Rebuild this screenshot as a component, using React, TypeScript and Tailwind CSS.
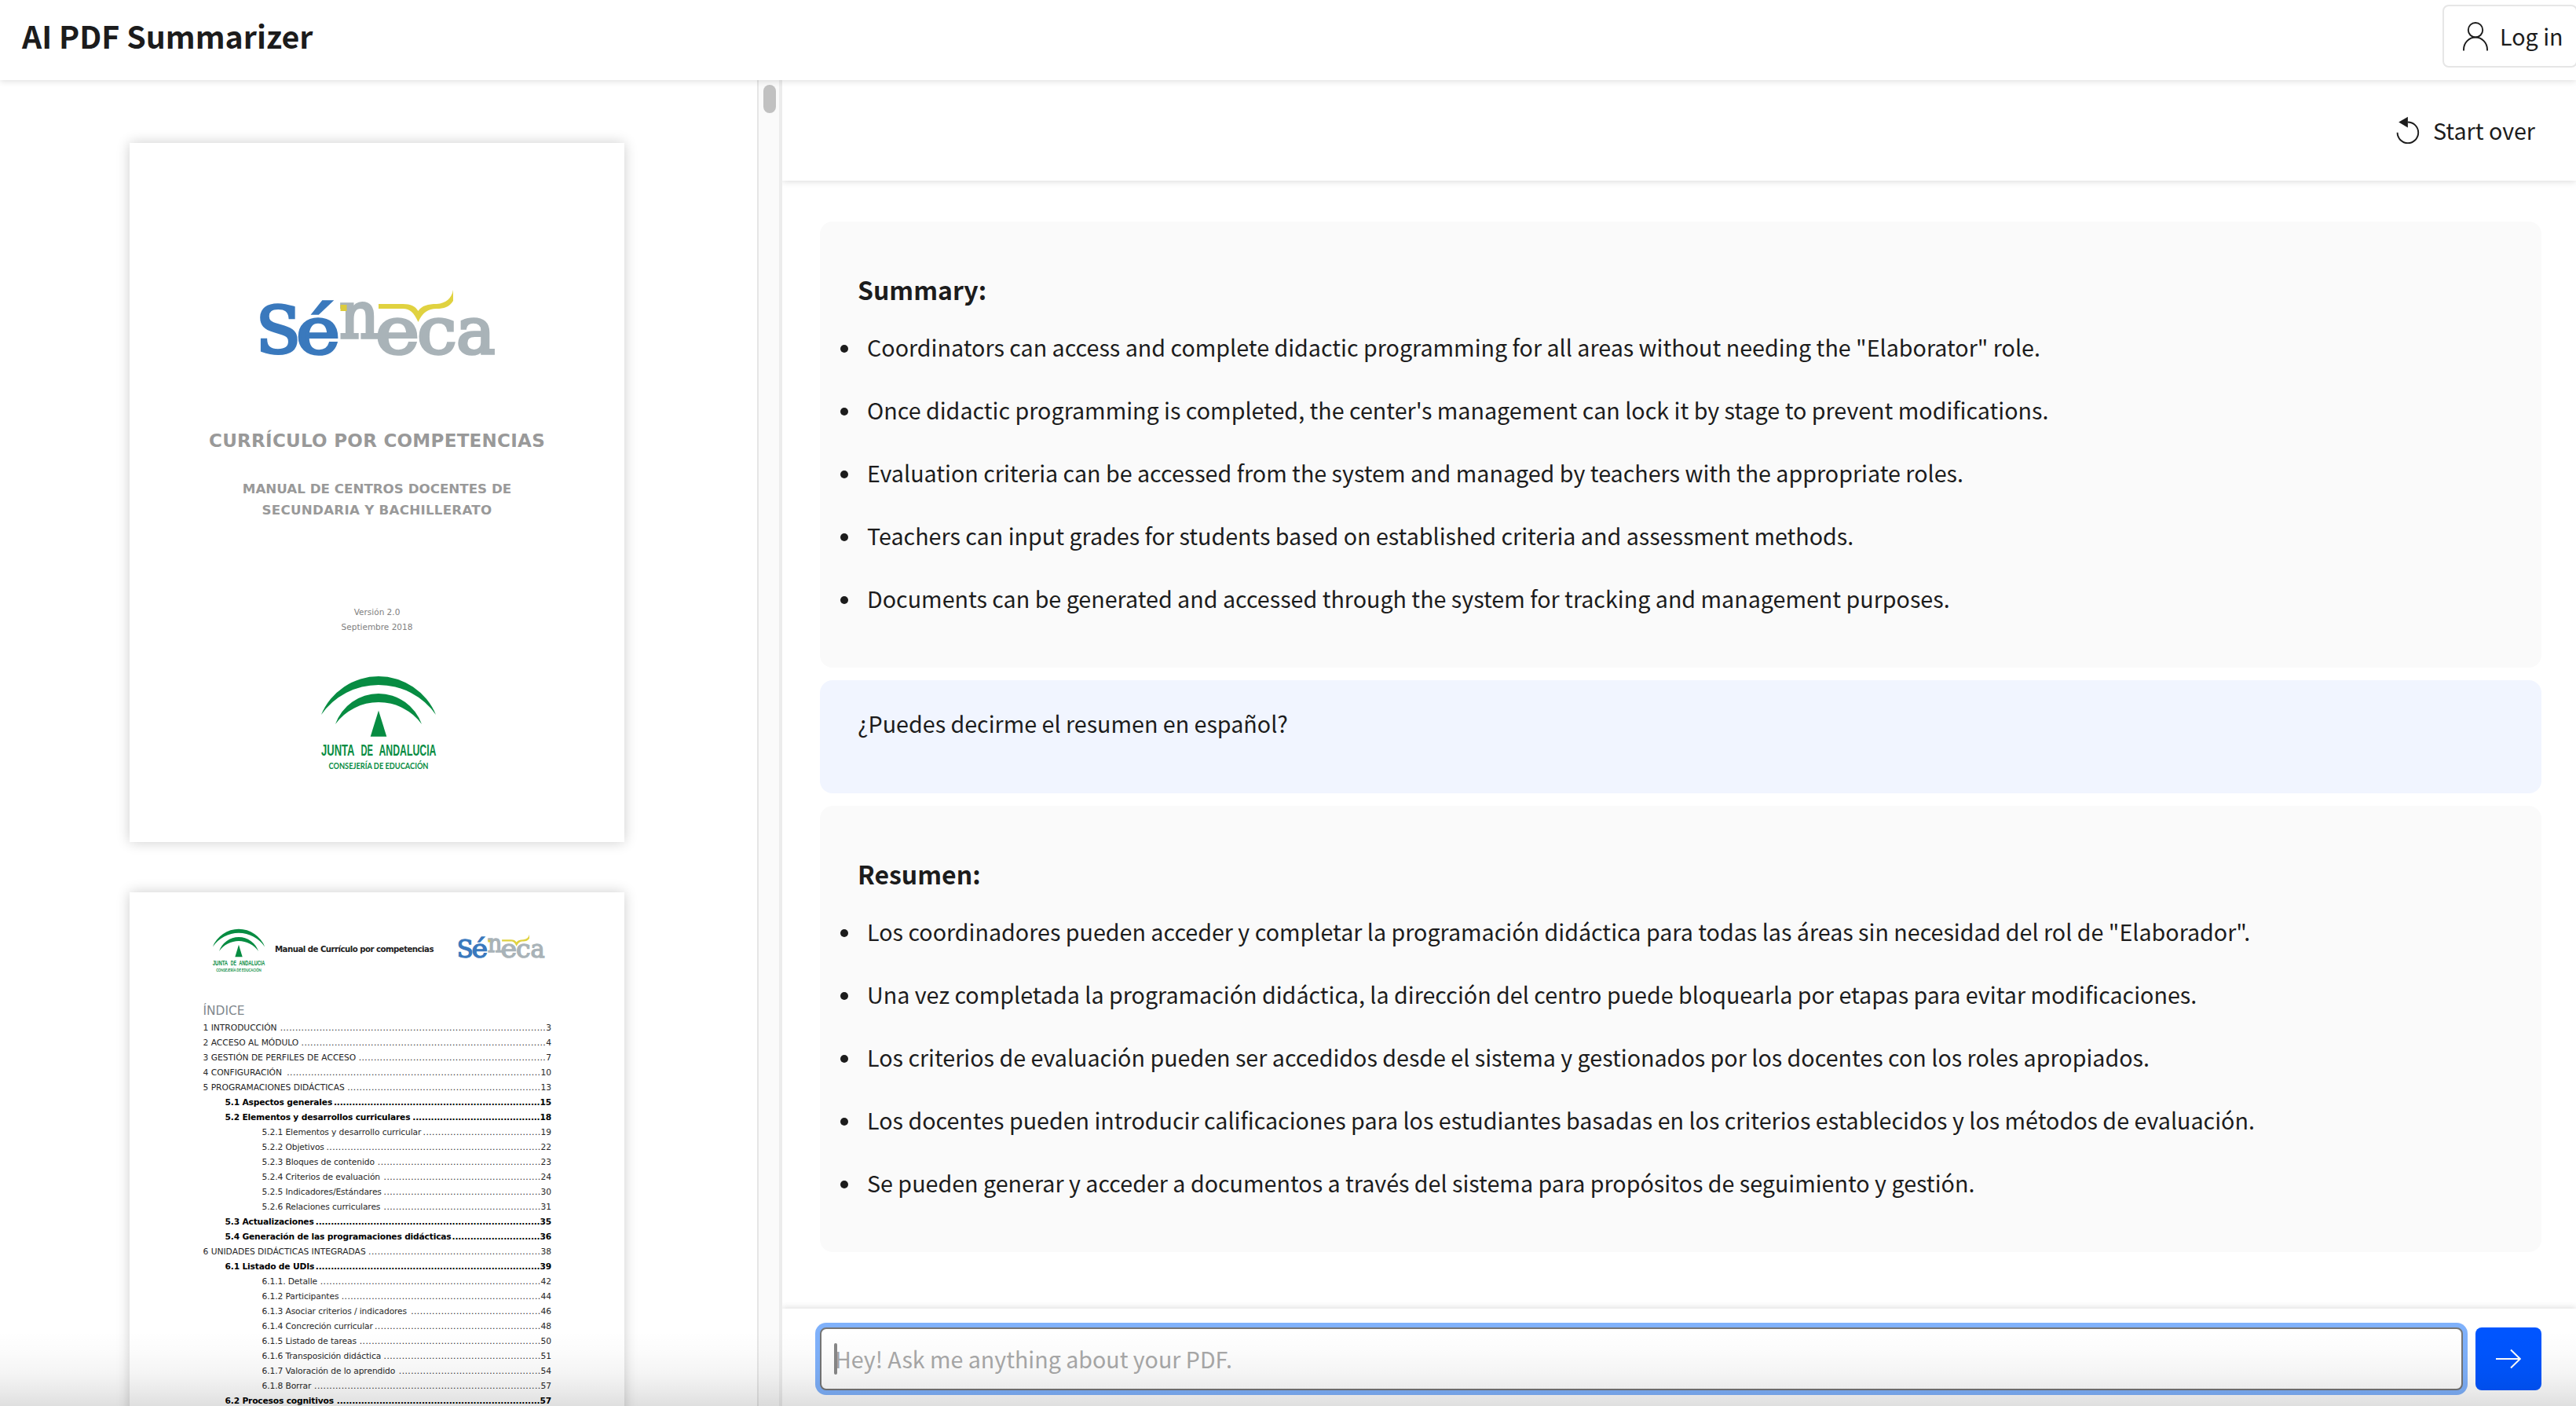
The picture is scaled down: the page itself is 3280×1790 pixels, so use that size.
import { useLayoutEffect, useRef, useState } from "react";

type Entry = { level: 0 | 1 | 2; label: string; page: string };

const TOC: Entry[] = [
  { level: 0, label: "1 INTRODUCCIÓN", page: "3" },
  { level: 0, label: "2 ACCESO AL MÓDULO", page: "4" },
  { level: 0, label: "3 GESTIÓN DE PERFILES DE ACCESO", page: "7" },
  { level: 0, label: "4 CONFIGURACIÓN", page: "10" },
  { level: 0, label: "5 PROGRAMACIONES DIDÁCTICAS", page: "13" },
  { level: 1, label: "5.1 Aspectos generales", page: "15" },
  { level: 1, label: "5.2 Elementos y desarrollos curriculares", page: "18" },
  { level: 2, label: "5.2.1 Elementos y desarrollo curricular", page: "19" },
  { level: 2, label: "5.2.2 Objetivos", page: "22" },
  { level: 2, label: "5.2.3 Bloques de contenido", page: "23" },
  { level: 2, label: "5.2.4 Criterios de evaluación", page: "24" },
  { level: 2, label: "5.2.5 Indicadores/Estándares", page: "30" },
  { level: 2, label: "5.2.6 Relaciones curriculares", page: "31" },
  { level: 1, label: "5.3 Actualizaciones", page: "35" },
  { level: 1, label: "5.4 Generación de las programaciones didácticas", page: "36" },
  { level: 0, label: "6 UNIDADES DIDÁCTICAS INTEGRADAS", page: "38" },
  { level: 1, label: "6.1 Listado de UDIs", page: "39" },
  { level: 2, label: "6.1.1. Detalle", page: "42" },
  { level: 2, label: "6.1.2 Participantes", page: "44" },
  { level: 2, label: "6.1.3 Asociar criterios / indicadores", page: "46" },
  { level: 2, label: "6.1.4 Concreción curricular", page: "48" },
  { level: 2, label: "6.1.5 Listado de tareas", page: "50" },
  { level: 2, label: "6.1.6 Transposición didáctica", page: "51" },
  { level: 2, label: "6.1.7 Valoración de lo aprendido", page: "54" },
  { level: 2, label: "6.1.8 Borrar", page: "57" },
  { level: 1, label: "6.2 Procesos cognitivos", page: "57" },
];

const LEVELS = [
  "tracking-[-0.01px] text-[#262626]",
  "pl-[28px] font-bold tracking-[-0.18px] text-black",
  "pl-[75px] tracking-[-0.11px] text-[#262626]",
];

const SUMMARY_EN = [
  'Coordinators can access and complete didactic programming for all areas without needing the "Elaborator" role.',
  "Once didactic programming is completed, the center's management can lock it by stage to prevent modifications.",
  "Evaluation criteria can be accessed from the system and managed by teachers with the appropriate roles.",
  "Teachers can input grades for students based on established criteria and assessment methods.",
  "Documents can be generated and accessed through the system for tracking and management purposes.",
];

const SUMMARY_ES = [
  'Los coordinadores pueden acceder y completar la programación didáctica para todas las áreas sin necesidad del rol de "Elaborador".',
  "Una vez completada la programación didáctica, la dirección del centro puede bloquearla por etapas para evitar modificaciones.",
  "Los criterios de evaluación pueden ser accedidos desde el sistema y gestionados por los docentes con los roles apropiados.",
  "Los docentes pueden introducir calificaciones para los estudiantes basadas en los criterios establecidos y los métodos de evaluación.",
  "Se pueden generar y acceder a documentos a través del sistema para propósitos de seguimiento y gestión.",
];

const DOT_PITCH = 3.88;

/* Dotted leader holding as many whole dots as fit between label and page number. */
function Leader({ bold }: { bold: boolean }) {
  const ref = useRef<HTMLSpanElement>(null);
  const [count, setCount] = useState(0);
  useLayoutEffect(() => {
    if (ref.current) setCount(Math.floor(ref.current.getBoundingClientRect().width / DOT_PITCH));
  }, []);
  return (
    <span ref={ref} aria-hidden className={`min-w-0 flex-1 text-right ${bold ? "tracking-[-0.2px]" : "tracking-[0.45px]"}`}>
      {".".repeat(count)}
    </span>
  );
}

function SenecaLogo({ className }: { className: string }) {
  const glyphs = [
    { c: "S", x: 326, y: 450.5, len: 57, fill: "#3a79bd" },
    { c: "é", x: 377, y: 450.5, len: 56, fill: "#3a79bd" },
    { c: "n", x: 432, y: 430.5, len: 51, fill: "#a9b3b8" },
    { c: "e", x: 478, y: 450.5, len: 56, fill: "#a9b3b8" },
    { c: "c", x: 531, y: 450.5, len: 50.5, fill: "#a9b3b8" },
    { c: "a", x: 581, y: 450.5, len: 49.5, fill: "#a9b3b8" },
  ];
  return (
    <svg viewBox="324 366 310 90" preserveAspectRatio="none" className={className} role="img" aria-label="Séneca">
      {glyphs.map((g, i) => (
        <text
          key={i}
          x={g.x}
          y={g.y}
          textLength={g.len}
          lengthAdjust="spacingAndGlyphs"
          fill={g.fill}
          stroke={g.fill}
          strokeWidth="3.6"
          fontFamily="DejaVu Serif, serif"
          fontSize="83"
        >
          {g.c}
        </text>
      ))}
      <rect x="433.5" y="389" width="8" height="8" fill="#dccb3d" />
      <path
        d="M482 388H513C523 388 529 391 532.5 397C537 390 545 388 556 388C568 387 575 381 577 370V384C572 392 565 394 556 394C545 394 538 399 532.5 411C527 399 522 394 513 394H482Z"
        fill="#e0d240"
      />
    </svg>
  );
}

function JuntaLogo({ className }: { className: string }) {
  const words = [
    { t: "JUNTA", x: 409, len: 42.5 },
    { t: "DE", x: 459.5, len: 15.5 },
    { t: "ANDALUCIA", x: 482.5, len: 73 },
  ];
  return (
    <svg viewBox="405 858 154 126" preserveAspectRatio="none" className={className} role="img" aria-label="Junta de Andalucía">
      <g fill="#078c42">
        <path d="M409 911A78.9 78.9 0 0 1 555 911A89 89 0 0 0 409 911Z" />
        <path d="M427 923A58.3 58.3 0 0 1 537 923A68 68 0 0 0 427 923Z" />
        <path d="M482 905.5L492.3 938.7H471.7Z" />
        {words.map((w) => (
          <text key={w.t} x={w.x} y="963.3" textLength={w.len} lengthAdjust="spacingAndGlyphs" fontFamily="Liberation Sans, sans-serif" fontWeight="700" fontSize="20">
            {w.t}
          </text>
        ))}
        <text x="418.5" y="979.5" textLength="127" lengthAdjust="spacingAndGlyphs" fontFamily="Lato, sans-serif" fontWeight="700" fontSize="12">
          CONSEJERÍA DE EDUCACIÓN
        </text>
      </g>
    </svg>
  );
}

function CoverPage() {
  return (
    <article className="flex h-[890px] w-[630px] shrink-0 flex-col bg-white text-center font-['DejaVu_Sans',sans-serif] text-[#999] shadow-[0_0_16px_rgba(0,0,0,0.2)]">
      <SenecaLogo className="mt-[183px] ml-[159px] h-[90px] w-[310px] overflow-visible" />
      <h2 className="mt-[90px] text-[23px] leading-8 font-bold tracking-[0.27px]">CURRÍCULO POR COMPETENCIAS</h2>
      <p className="mt-[32px] text-[16.7px] leading-[26.7px] font-bold">MANUAL DE CENTROS DOCENTES DE</p>
      <p className="text-[16.7px] leading-[26.7px] font-bold tracking-[0.26px]">SECUNDARIA Y BACHILLERATO</p>
      <p className="mt-[108px] text-[10.5px] leading-[18.7px] text-[#808080]">Versión 2.0</p>
      <p className="text-[10.5px] leading-[18.7px] text-[#808080]">Septiembre 2018</p>
      <JuntaLogo className="mt-[49px] ml-[240px] h-[126px] w-[154px] overflow-visible" />
    </article>
  );
}

function IndexPage() {
  return (
    <article className="mt-16 flex h-[890px] w-[630px] shrink-0 flex-col bg-white pr-[93px] pl-[93.5px] font-['DejaVu_Sans',sans-serif] shadow-[0_0_16px_rgba(0,0,0,0.2)]">
      <header className="mt-[45px] flex h-[59px] items-start">
        <JuntaLogo className="ml-[10px] h-[58px] w-[70px] shrink-0 overflow-visible" />
        <p className="mt-[18px] ml-[11.5px] w-[233px] text-[10.2px] leading-5 font-bold tracking-[-0.53px] whitespace-nowrap text-[#222]">
          Manual de Currículo por competencias
        </p>
        <SenecaLogo className="mt-[7px] -ml-[2px] h-[33.5px] w-[114px] shrink-0 overflow-visible" />
      </header>
      <h3 className="mt-[37px] text-[15.4px] leading-[21px] text-[#7f888d]">ÍNDICE</h3>
      <ol className="mt-[0.5px]">
        {TOC.map((e) => (
          <li key={e.label} className={`flex text-[10.7px] leading-[19px] whitespace-nowrap ${LEVELS[e.level]}`}>
            <span>{e.label}</span>
            <Leader bold={e.level === 1} />
            <span>{e.page}</span>
          </li>
        ))}
      </ol>
    </article>
  );
}

function Answer({ title, items }: { title: string; items: string[] }) {
  return (
    <section className="h-[568px] shrink-0 rounded-2xl bg-[#fafafa] pt-16 pl-12">
      <h2 className="text-[32px] leading-[44px] font-bold">{title}</h2>
      <ul className="mt-[28px] flex flex-col gap-8">
        {items.map((t) => (
          <li key={t} className="-ml-[22px] flex h-12 items-center leading-[48px] whitespace-nowrap">
            <span className="mt-[4px] mr-[24px] size-[10px] shrink-0 rounded-full bg-[#1c1c1c]" />
            {t}
          </li>
        ))}
      </ul>
    </section>
  );
}

export default function App() {
  return (
    <div className="relative flex h-[1790px] w-[3280px] flex-col overflow-hidden bg-white font-['Noto_Sans_CJK_SC',sans-serif] text-[28.66px] text-[#1c1c1c]">
      <header className="relative z-10 flex h-[102px] shrink-0 items-start bg-white pl-7 shadow-[0_1px_8px_rgba(0,0,0,0.15)]">
        <h1 className="mt-[21px] text-[39.3px] leading-[48px] font-bold">AI PDF Summarizer</h1>
        <button className="mt-[6px] -mr-[2px] ml-auto flex h-20 w-[172px] shrink-0 items-center rounded-lg border-2 border-[#e6e6e6] pl-6 whitespace-nowrap">
          <svg viewBox="0 0 32 38" className="mt-[1px] h-[38px] w-8" fill="none" stroke="#1c1c1c" strokeWidth="1.9">
            <circle cx="16" cy="10.2" r="9.2" />
            <path d="M1 36.5V35A15 15.5 0 0 1 31 35V36.5" />
          </svg>
          <span className="ml-[15px] leading-[48px]">Log in</span>
        </button>
      </header>

      <main className="flex min-h-0 flex-1">
        <aside className="flex w-[964px] shrink-0 flex-col overflow-hidden pt-20 pl-[165px]">
          <CoverPage />
          <IndexPage />
        </aside>
        <div className="w-8 shrink-0 border-r-4 border-l-2 border-r-[#ececec] border-l-[#e6e6e6] bg-[#fafafa] pt-[6px] pl-[6px]">
          <div className="h-9 w-4 rounded-full bg-[#c1c1c1]" />
        </div>

        <section className="flex min-w-0 flex-1 flex-col overflow-hidden">
          <div className="flex h-32 shrink-0 items-center justify-end pr-[52px] shadow-[0_1px_8px_rgba(0,0,0,0.15)]">
            <button className="flex items-center">
              <svg viewBox="0 0 30 36" className="h-9 w-[30px]" fill="none" stroke="#1c1c1c" strokeWidth="1.9">
                <path d="M1.6 20.8A13.3 13.3 0 1 0 14.9 7.5" />
                <path d="M3.2 7.5L14.9 0.8V14.4Z" fill="#1c1c1c" stroke="none" />
              </svg>
              <span className="ml-[17px] leading-[48px]">Start over</span>
            </button>
          </div>

          <div className="flex min-h-0 flex-1 flex-col gap-4 pt-[52px] pr-11 pl-12">
            <Answer title="Summary:" items={SUMMARY_EN} />
            <section className="h-36 shrink-0 rounded-2xl bg-[#f1f5ff] pt-[31px] pl-12 leading-[48px]">
              ¿Puedes decirme el resumen en español?
            </section>
            <Answer title="Resumen:" items={SUMMARY_ES} />
          </div>

          <footer className="flex h-[124px] shrink-0 items-start gap-4 bg-white pt-6 pr-11 pl-12 shadow-[0_-1px_8px_rgba(0,0,0,0.15)]">
            <div className="relative h-20 flex-1">
              <input
                placeholder="Hey! Ask me anything about your PDF."
                className="h-20 w-full rounded-lg border-2 border-[#757575] bg-white pb-[1px] pl-[17px] text-[28.6px] shadow-[0_0_0_6px_#7fb1fb] outline-none placeholder:text-[#a9a9a9]"
              />
              <span className="absolute top-5 left-[18px] h-10 w-1 rounded-full bg-[#888]" />
            </div>
            <button className="flex h-20 w-[84px] items-center justify-center rounded-lg bg-[#0055ff]" aria-label="Send">
              <svg viewBox="0 0 32 26" className="h-[26px] w-8" fill="none" stroke="#fff" strokeWidth="2">
                <path d="M0 13H31M19 1.5L30.8 13L19 24.5" />
              </svg>
            </button>
          </footer>
        </section>
      </main>

      <div className="pointer-events-none absolute inset-x-0 bottom-0 z-20 h-[96px] bg-[linear-gradient(to_bottom,rgba(0,0,0,0)_0%,rgba(0,0,0,0.015)_30%,rgba(0,0,0,0.045)_58%,rgba(0,0,0,0.085)_82%,rgba(0,0,0,0.125)_100%)]" />
    </div>
  );
}
